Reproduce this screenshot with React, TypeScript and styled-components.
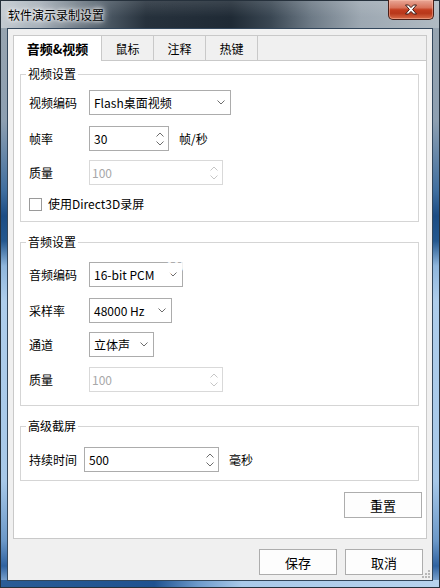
import React from "react";
import styled, { createGlobalStyle } from "styled-components";

const GlobalStyle = createGlobalStyle`
  html, body { margin: 0; padding: 0; }
  body {
    font-family: "Noto Sans CJK SC", "Microsoft YaHei", sans-serif;
    font-size: 12px;
    color: #000;
  }
  * { box-sizing: border-box; }
`;

const Window = styled.div`
  width: 440px;
  height: 588px;
  border: 1px solid #26313c;
  display: flex;
  flex-direction: column;
  background:
    linear-gradient(to right, #2a5c96 0%, #1f5290 35%, #6d9acb 45%, #a9c9e9 55%, #b7d3ee 100%) bottom / 100% 7px no-repeat,
    linear-gradient(to bottom, #9aa6b0 0px, #8d9fb1 120px, #3f6e9f 190px, #1b4c84 215px, #24588f 240px, #8fb6dc 265px, #aecdeb 300px, #a7c8e8 480px, #6b98c8 540px, #2f62a0 565px, #a6c7e8 588px);
`;

const TitleBar = styled.div`
  height: 27px;
  display: flex;
  justify-content: space-between;
  align-items: flex-start;
  background:
    linear-gradient(to bottom, rgba(255,255,255,0.12), rgba(255,255,255,0) 60%),
    linear-gradient(to right, #c3cad1 0px, #a3adb6 40px, #56636f 95px, #26313c 145px, #1f2a35 230px, #3a4753 270px, #6d7a86 310px, #9da8b2 360px, #b1bbc3 440px);
`;

const Title = styled.span`
  padding-left: 7px;
  line-height: 27px;
  font-size: 12px;
  color: #000;
  text-shadow: 0 0 6px #fff, 0 0 10px rgba(255, 255, 255, 0.85), 0 0 3px rgba(255,255,255,0.9);
`;

const CloseButton = styled.div`
  width: 46px;
  height: 20px;
  margin-top: -1px;
  margin-right: 5px;
  border: 1px solid #4a1f18;
  border-top: none;
  border-radius: 0 0 5px 5px;
  display: flex;
  align-items: center;
  justify-content: center;
  background: linear-gradient(to bottom, #e9a797 0%, #d8735b 40%, #c23d1f 52%, #b8371a 70%, #d86c48 100%);
  box-shadow: inset 0 0 0 1px rgba(255, 200, 180, 0.45);
`;

const FrameBody = styled.div`
  flex: 1;
  display: flex;
  padding: 0 6px 6px 6px;
`;

const Client = styled.div`
  flex: 1;
  position: relative;
  border: 1px solid #33475c;
  background: #f0f0f0;
  display: flex;
  flex-direction: column;
  padding: 6px 5px 5px 5px;
`;

const TabHeader = styled.div`
  height: 25px;
  display: flex;
  border: 1px solid #c9c9c9;
  border-bottom: none;
  background: #f0f0f0;
`;

const Tab = styled.div<{ $active?: boolean; $w: number }>`
  width: ${(p) => p.$w}px;
  margin-left: ${(p) => (p.$active ? "-1px" : "0")};
  margin-top: -1px;
  height: ${(p) => (p.$active ? "26px" : "25px")};
  border: 1px solid #c9c9c9;
  border-left: ${(p) => (p.$active ? "1px solid #c9c9c9" : "none")};
  border-bottom: none;
  background: ${(p) => (p.$active ? "#ffffff" : "#f0f0f0")};
  display: flex;
  align-items: center;
  justify-content: center;
  font-size: ${(p) => (p.$active ? "13px" : "12px")};
  font-weight: ${(p) => (p.$active ? 700 : 400)};
  position: relative;
  z-index: ${(p) => (p.$active ? 1 : 0)};
  padding-bottom: ${(p) => (p.$active ? "1px" : "0")};
`;

const Panel = styled.div`
  flex: 1;
  position: relative;
  border: 1px solid #c9c9c9;
  background: #ffffff;
  display: flex;
  flex-direction: column;
`;

const Group = styled.fieldset<{ $mt: number; $pt: number; $pb: number }>`
  margin: ${(p) => p.$mt}px 7px 0 6px;
  padding: ${(p) => p.$pt}px 8px ${(p) => p.$pb}px 8px;
  border: 1px solid #d5d5d5;
  min-width: 0;
`;

const Legend = styled.legend`
  margin-left: -3px;
  padding: 0 2px;
  line-height: 16px;
  font-size: 12px;
`;

const Row = styled.div<{ $mt?: number }>`
  display: flex;
  align-items: center;
  height: 25px;
  margin-top: ${(p) => p.$mt ?? 0}px;
`;

const Label = styled.span<{ $w?: number }>`
  width: ${(p) => p.$w ?? 60}px;
  flex: none;
  line-height: 16px;
`;

const Unit = styled.span`
  margin-left: 10px;
  line-height: 16px;
`;

const SelectBox = styled.div<{ $w: number }>`
  width: ${(p) => p.$w}px;
  height: 25px;
  border: 1px solid #acacac;
  background: #fff;
  display: flex;
  align-items: center;
  justify-content: space-between;
  padding: 0 5px 0 4px;
  line-height: 16px;
`;

const SpinBox = styled.div<{ $w: number; $disabled?: boolean }>`
  width: ${(p) => p.$w}px;
  height: 25px;
  border: 1px solid ${(p) => (p.$disabled ? "#d9d9d9" : "#acacac")};
  background: #fff;
  color: ${(p) => (p.$disabled ? "#a8a8a8" : "#000")};
  display: flex;
  align-items: center;
  justify-content: space-between;
  padding: 0 4px 0 ${(p) => (p.$disabled ? 2 : 4)}px;
  line-height: 16px;
`;

const SpinArrows = styled.div`
  display: flex;
  flex-direction: column;
  gap: 4px;
`;

const CheckRow = styled.label`
  display: flex;
  align-items: center;
  height: 16px;
  margin-top: 11px;
  line-height: 16px;
`;

const CheckBox = styled.span`
  width: 13px;
  height: 13px;
  border: 1px solid #9a9a9a;
  background: #fff;
  margin-right: 6px;
  flex: none;
`;

const ResetRow = styled.div`
  display: flex;
  justify-content: flex-end;
  margin: 11px 4px 0 0;
`;

const Button = styled.div`
  width: 78px;
  height: 26px;
  border: 1px solid #adadad;
  background: #fdfdfd;
  display: flex;
  align-items: center;
  justify-content: center;
  font-size: 13px;
`;

const ButtonRow = styled.div`
  display: flex;
  justify-content: flex-end;
  gap: 8px;
  margin-top: 10px;
  padding-right: 4px;
`;

const Watermark = styled.span`
  position: absolute;
  left: 152px;
  top: 184px;
  font-family: "Liberation Sans", Arial, sans-serif;
  font-size: 31px;
  line-height: 34px;
  color: rgba(255, 255, 255, 0.85);
  pointer-events: none;
  z-index: 2;
`;

const Grip = styled.svg`
  position: absolute;
  right: 1px;
  bottom: 1px;
`;

const Chevron = ({ up, color = "#6d6d6d" }: { up?: boolean; color?: string }) => (
  <svg width="8" height="5" viewBox="0 0 8 5">
    <path
      d={up ? "M0.5 4.5 L4 1 L7.5 4.5" : "M0.5 0.5 L4 4 L7.5 0.5"}
      fill="none"
      stroke={color}
      strokeWidth="1"
    />
  </svg>
);

const Spinner = ({ disabled }: { disabled?: boolean }) => (
  <SpinArrows>
    <Chevron up color={disabled ? "#c6c6c6" : "#6d6d6d"} />
    <Chevron color={disabled ? "#c6c6c6" : "#6d6d6d"} />
  </SpinArrows>
);

export default function App() {
  return (
    <>
      <GlobalStyle />
      <Window>
        <TitleBar>
          <Title>软件演示录制设置</Title>
          <CloseButton>
            <svg width="14" height="11" viewBox="0 0 14 11">
              <path
                d="M1.5 1 L4.5 1 L7 3.6 L9.5 1 L12.5 1 L8.6 5.5 L12.5 10 L9.5 10 L7 7.4 L4.5 10 L1.5 10 L5.4 5.5 Z"
                fill="#ffffff"
                stroke="#3d1a14"
                strokeWidth="1"
                strokeLinejoin="round"
              />
            </svg>
          </CloseButton>
        </TitleBar>
        <FrameBody>
          <Client>
            <TabHeader>
              <Tab $active $w={89}>音频&amp;视频</Tab>
              <Tab $w={52}>鼠标</Tab>
              <Tab $w={52}>注释</Tab>
              <Tab $w={52}>热键</Tab>
            </TabHeader>
            <Panel>
              <Group $mt={5} $pt={8} $pb={9}>
                <Legend>视频设置</Legend>
                <Row>
                  <Label>视频编码</Label>
                  <SelectBox $w={142}>
                    <span>Flash桌面视频</span>
                    <Chevron />
                  </SelectBox>
                </Row>
                <Row $mt={11}>
                  <Label>帧率</Label>
                  <SpinBox $w={80}>
                    <span>30</span>
                    <Spinner />
                  </SpinBox>
                  <Unit>帧/秒</Unit>
                </Row>
                <Row $mt={9}>
                  <Label>质量</Label>
                  <SpinBox $w={134} $disabled>
                    <span>100</span>
                    <Spinner disabled />
                  </SpinBox>
                </Row>
                <CheckRow>
                  <CheckBox />
                  <span>使用Direct3D录屏</span>
                </CheckRow>
              </Group>

              <Group $mt={12} $pt={12} $pb={13}>
                <Legend>音频设置</Legend>
                <Row>
                  <Label>音频编码</Label>
                  <SelectBox $w={94}>
                    <span>16-bit PCM</span>
                    <Chevron />
                  </SelectBox>
                </Row>
                <Row $mt={11}>
                  <Label>采样率</Label>
                  <SelectBox $w={83}>
                    <span>48000 Hz</span>
                    <Chevron />
                  </SelectBox>
                </Row>
                <Row $mt={9}>
                  <Label>通道</Label>
                  <SelectBox $w={65}>
                    <span>立体声</span>
                    <Chevron />
                  </SelectBox>
                </Row>
                <Row $mt={10}>
                  <Label>质量</Label>
                  <SpinBox $w={134} $disabled>
                    <span>100</span>
                    <Spinner disabled />
                  </SpinBox>
                </Row>
              </Group>

              <Group $mt={12} $pt={13} $pb={8}>
                <Legend>高级截屏</Legend>
                <Row>
                  <Label $w={55}>持续时间</Label>
                  <SpinBox $w={135}>
                    <span>500</span>
                    <Spinner />
                  </SpinBox>
                  <Unit>毫秒</Unit>
                </Row>
              </Group>

              <ResetRow>
                <Button>重置</Button>
              </ResetRow>
              <Watermark>jiqw.com</Watermark>
            </Panel>
            <ButtonRow>
              <Button>保存</Button>
              <Button>取消</Button>
            </ButtonRow>
            <Grip width="10" height="10" viewBox="0 0 10 10">
              {[
                [7, 1],
                [4, 4],
                [7, 4],
                [1, 7],
                [4, 7],
                [7, 7],
              ].map(([x, y], i) => (
                <rect key={i} x={x} y={y} width="2" height="2" fill="#b8b8b8" />
              ))}
            </Grip>
          </Client>
        </FrameBody>
      </Window>
    </>
  );
}
